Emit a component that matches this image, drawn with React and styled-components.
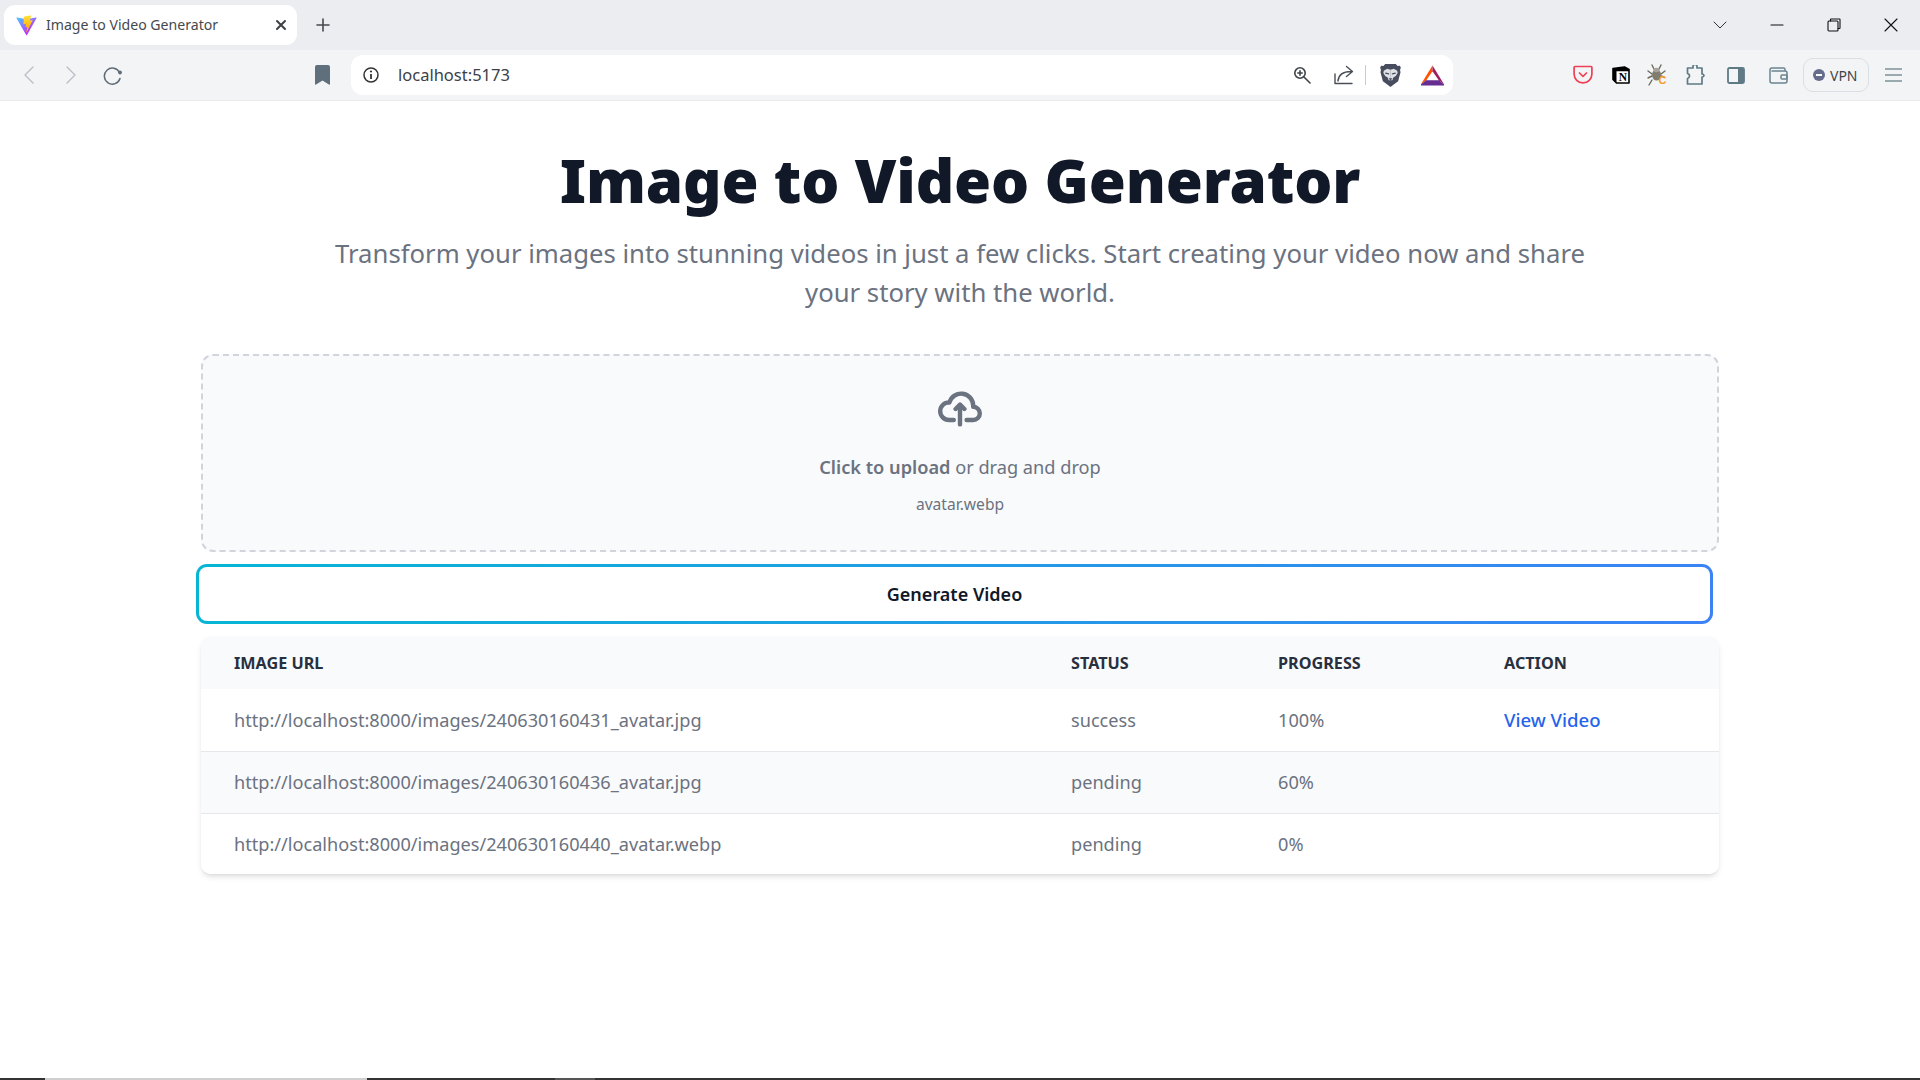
import React from "react";
import styled, { createGlobalStyle } from "styled-components";

const Global = createGlobalStyle`
  html, body { margin: 0; padding: 0; background: #fff; }
  body { font-family: "Noto Sans", "Open Sans", "Liberation Sans", sans-serif; }
  * { box-sizing: border-box; }
`;

const Page = styled.div`
  width: 1920px;
  height: 1080px;
  display: flex;
  flex-direction: column;
  overflow: hidden;
`;

const TabStrip = styled.div`
  height: 50px;
  background: #ebedf0;
  display: flex;
  align-items: flex-start;
  padding: 5px 0 0 4px;
`;

const Tab = styled.div`
  width: 293px;
  height: 40px;
  background: #fff;
  border-radius: 11px;
  display: flex;
  align-items: center;
  padding: 0 10px 0 12px;
  color: #45494e;
  font-size: 14.1px;
`;

const TabTitle = styled.span`
  margin-left: 9px;
  padding-bottom: 2px;
  flex: 1;
  white-space: nowrap;
`;

const NewTab = styled.div`
  margin-left: 13px;
  width: 26px;
  height: 40px;
  display: flex;
  align-items: center;
  justify-content: center;
`;

const WindowControls = styled.div`
  margin-left: auto;
  display: flex;
  height: 40px;
  align-items: center;
  padding-right: 1px;
`;

const WinButton = styled.div`
  width: 57px;
  display: flex;
  justify-content: center;
`;

const Toolbar = styled.div`
  height: 51px;
  background: #f3f4f6;
  border-bottom: 1px solid #e8eaed;
  display: flex;
  align-items: flex-start;
  padding: 5px 0 0 8px;
`;

const Slot = styled.div`
  flex: none;
  width: ${(p) => p.$w || 42}px;
  height: 40px;
  margin-left: ${(p) => p.$ml || 0}px;
  display: flex;
  align-items: center;
  justify-content: center;
`;

const AddressBar = styled.div`
  flex: none;
  width: 1102px;
  height: 40px;
  margin-left: 9px;
  margin-right: 111px;
  background: #fff;
  border-radius: 12px;
  display: flex;
  align-items: center;
`;

const Url = styled.span`
  margin-left: 7px;
  flex: 1;
  font-size: 16.5px;
  line-height: 40px;
  height: 40px;
  color: #3c4148;
`;

const Divider = styled.div`
  flex: none;
  width: 1px;
  height: 20px;
  background: #c9cbce;
  margin: 0 3px 0 0;
`;

const VpnButton = styled.div`
  flex: none;
  width: 66px;
  height: 34px;
  margin-top: 3px;
  border: 1px solid #d9dfe4;
  border-radius: 10px;
  display: flex;
  align-items: center;
  gap: 5px;
  padding-left: 9px;
  font-size: 14px;
  color: #3f444a;
`;

const VpnDot = styled.span`
  width: 12px;
  height: 12px;
  border-radius: 50%;
  background: #666d8c;
  display: flex;
  align-items: center;
  justify-content: center;
  &::after {
    content: "";
    width: 6px;
    height: 2px;
    background: #fff;
  }
`;

const Main = styled.main`
  flex: 1;
  display: flex;
  flex-direction: column;
  align-items: center;
  padding-top: 47px;
`;

const Title = styled.h1`
  margin: 0;
  font-size: 60px;
  line-height: 64px;
  font-weight: 900;
  color: #111827;
  letter-spacing: -0.15px;
`;

const Subtitle = styled.p`
  margin: 22px 0 0;
  width: 1270px;
  text-align: center;
  font-size: 25.7px;
  line-height: 39px;
  color: #6b7280;
`;

const Content = styled.div`
  width: 1518px;
  margin-top: 42px;
  display: flex;
  flex-direction: column;
`;

const DropZone = styled.div`
  height: 198px;
  background: #f9fafb;
  border: 2px dashed #d1d5db;
  border-radius: 12px;
  display: flex;
  flex-direction: column;
  align-items: center;
  padding-top: 35px;
  color: #6b7280;
`;

const DropText = styled.p`
  margin: 26px 0 0;
  font-size: 18.2px;
  line-height: 28px;
  strong { font-weight: 600; }
`;

const FileName = styled.p`
  margin: 11px 0 0;
  font-size: 15.6px;
  line-height: 24px;
`;

const GenerateButton = styled.button`
  width: 1517px;
  height: 60px;
  margin: 12px 0 0 -5px;
  border: 3px solid transparent;
  border-radius: 11px;
  background: linear-gradient(#fff, #fff) padding-box,
    linear-gradient(100deg, #06b6d4, #3b82f6) border-box;
  font-family: inherit;
  font-size: 18px;
  font-weight: 600;
  color: #111827;
`;

const TableCard = styled.div`
  margin-top: 12px;
  border-radius: 10px;
  overflow: hidden;
  box-shadow: 0 4px 6px -1px rgba(0, 0, 0, 0.1), 0 2px 4px -2px rgba(0, 0, 0, 0.1);
`;

const Table = styled.table`
  width: 100%;
  table-layout: fixed;
  border-collapse: collapse;
`;

const HeadCell = styled.th`
  width: ${(p) => p.$w}px;
  height: 53px;
  padding: 0 0 0 33px;
  text-align: left;
  background: #f9fafb;
  font-size: 16.2px;
  font-weight: 700;
  color: #283040;
  text-transform: uppercase;
`;

const Row = styled.tr`
  background: ${(p) => (p.$alt ? "#f9fafb" : "#fff")};
  border-bottom: ${(p) => (p.$last ? "none" : "1px solid #e5e7eb")};
`;

const Cell = styled.td`
  height: ${(p) => (p.$last ? 61 : 62)}px;
  padding: 0 0 0 33px;
  font-size: 18.15px;
  color: #6b7280;
`;

const VideoLink = styled.a`
  color: #2563eb;
  font-size: 18.6px;
  font-weight: 500;
  text-decoration: none;
`;

const TaskBar = styled.div`
  flex: none;
  height: 2px;
  background: #333;
  display: flex;
`;

const TaskSegment = styled.div`
  width: ${(p) => p.$w}px;
  margin-left: ${(p) => p.$ml}px;
  background: ${(p) => p.$c};
`;

const ViteLogo = () => (
  <svg width="21" height="21" viewBox="0 0 410 404" fill="none">
    <defs>
      <linearGradient id="va" x1="6" y1="33" x2="235" y2="344" gradientUnits="userSpaceOnUse">
        <stop stopColor="#41D1FF" />
        <stop offset="1" stopColor="#BD34FE" />
      </linearGradient>
      <linearGradient id="vb" x1="194.65" y1="8.8" x2="236.08" y2="292.99" gradientUnits="userSpaceOnUse">
        <stop stopColor="#FFEA83" />
        <stop offset="0.083" stopColor="#FFDD35" />
        <stop offset="1" stopColor="#FFA800" />
      </linearGradient>
    </defs>
    <path d="M399.641 59.5246L215.643 388.545C211.844 395.338 202.084 395.378 198.228 388.618L10.5817 59.5563C6.38087 52.1896 12.6802 43.2665 21.0281 44.7586L205.223 77.6824C206.398 77.8924 207.601 77.8904 208.776 77.6763L389.119 44.8058C397.439 43.2894 403.768 52.1434 399.641 59.5246Z" fill="url(#va)" />
    <path d="M292.965 1.5744L156.801 28.2552C154.563 28.6937 152.906 30.5903 152.771 32.8664L144.395 174.33C144.198 177.662 147.258 180.248 150.51 179.498L188.42 170.749C191.967 169.931 195.172 173.055 194.443 176.622L183.18 231.775C182.422 235.487 185.907 238.661 189.532 237.56L212.947 230.446C216.577 229.344 220.065 232.527 219.297 236.242L201.398 322.875C200.278 328.294 207.486 331.249 210.492 326.603L212.5 323.5L323.454 102.072C325.312 98.3645 322.108 94.137 318.036 94.9228L279.014 102.454C275.347 103.161 272.227 99.746 273.262 96.1583L298.731 7.86689C299.767 4.27314 296.636 0.855181 292.965 1.5744Z" fill="url(#vb)" />
  </svg>
);

const Stroke = ({ w = 20, h = 20, vb = "0 0 20 20", c = "#5f6b76", sw = 1.5, children }) => (
  <svg width={w} height={h} viewBox={vb} fill="none" stroke={c} strokeWidth={sw} strokeLinecap="round" strokeLinejoin="round">
    {children}
  </svg>
);

const BraveIcon = () => (
  <svg width="21" height="24" viewBox="0 0 22 24">
    <path d="M5.500.5h11l2 2 2.300-.3 1 2-.8 2.500.5 2.500-2.500 9.300-6 4.500-2 1.500-2-1.500-6-4.500L.500 9.200 1 6.700.2 4.200l1-2 2.300.3z" fill="#474d5e" />
    <path d="M4 7.500 7.500 5.500 11 6.500l3.500-1L18 7.500l.5 2.500-2 3-2.500 1.500-1 3H9l-1-3L5.500 13l-2-3z" fill="#dfe1e7" />
    <path d="M6 10l3 .8M16 10l-3 .8" stroke="#474d5e" strokeWidth="1.300" strokeLinecap="round" />
    <path d="M9 15.500h4L11 18z" fill="#474d5e" />
    <path d="M11 7v8" stroke="#bfc3cd" strokeWidth="1" />
  </svg>
);

const BatIcon = () => (
  <svg width="23" height="21" viewBox="0 0 24 21">
    <path d="M12 0 0 19.500l5.500-4L12 6z" fill="#ff5000" />
    <path d="M12 0 24 19.500l-5.500-4L12 6z" fill="#9e1f63" />
    <path d="M0 19.500 5.500 15.500h13l5.500 4V21H0z" fill="#662d91" />
  </svg>
);

const PocketIcon = () => (
  <svg width="20" height="20" viewBox="0 0 20 20" fill="none" stroke="#ef4056" strokeWidth="1.700" strokeLinecap="round" strokeLinejoin="round">
    <path d="M2 1.500h16a1 1 0 0 1 .9 1v6.500a8.900 8.900 0 0 1-17.800 0V2.500a1 1 0 0 1 .9-1z" />
    <path d="M6.500 8 10 11.300 13.500 8" />
  </svg>
);

const NotionIcon = () => (
  <svg width="18" height="18" viewBox="0 0 18 18">
    <path d="M1 2.500 12.500 1 17 3.500V17H4.500L1 13.500z" fill="#fff" stroke="#000" strokeWidth="1.600" strokeLinejoin="round" />
    <path d="M1 2.500 4.500 5.200H17V3.500L12.500 1zM1 2.500v11l3.500 3.500V5.200z" fill="#000" />
    <text x="10.800" y="15" fontFamily="Liberation Serif, serif" fontWeight="700" fontSize="11.500" textAnchor="middle" fill="#000">N</text>
  </svg>
);

const BugIcon = () => (
  <svg width="24" height="24" viewBox="0 0 24 24">
    <g stroke="#6d6a60" strokeWidth="1.400" fill="none" strokeLinecap="round">
      <path d="M7 2 9 6M16 2l-2 4M3 8l4 3M20 8l-4 3M3 15l4-2M4 22l3-5M16 13l3 1" />
    </g>
    <ellipse cx="11.500" cy="12" rx="4.500" ry="5.500" fill="#807c72" />
    <ellipse cx="11.500" cy="7" rx="3.200" ry="2.200" fill="#a7a398" />
    <text x="17.500" y="21" fontFamily="Liberation Sans, sans-serif" fontWeight="700" fontSize="11" textAnchor="middle" fill="#f59a23">C</text>
  </svg>
);

const App = () => (
  <Page>
    <Global />
    <TabStrip>
      <Tab>
        <ViteLogo />
        <TabTitle>Image to Video Generator</TabTitle>
        <Stroke w={12} h={12} vb="0 0 12 12" c="#3c4043" sw={2}>
          <path d="M2 2l8 8M10 2l-8 8" />
        </Stroke>
      </Tab>
      <NewTab>
        <Stroke w={14} h={14} vb="0 0 14 14" c="#45494e" sw={1.6}>
          <path d="M7 1v12M1 7h12" />
        </Stroke>
      </NewTab>
      <WindowControls>
        <WinButton>
          <Stroke w={14} h={8} vb="0 0 14 8" c="#333" sw={1}>
            <path d="M1 1l6 6 6-6" />
          </Stroke>
        </WinButton>
        <WinButton>
          <Stroke w={14} h={2} vb="0 0 14 2" c="#111" sw={1.2}>
            <path d="M1 1h12" />
          </Stroke>
        </WinButton>
        <WinButton>
          <Stroke w={14} h={14} vb="0 0 14 14" c="#111" sw={1.1}>
            <rect x="1" y="3" width="10" height="10" rx="1" />
            <path d="M3.500 3V1.500a.5.5 0 0 1 .5-.5h8.500a.5.5 0 0 1 .5.5V10a.5.5 0 0 1-.5.5H11" />
          </Stroke>
        </WinButton>
        <WinButton>
          <Stroke w={14} h={14} vb="0 0 14 14" c="#111" sw={1.1}>
            <path d="M1 1l12 12M13 1L1 13" />
          </Stroke>
        </WinButton>
      </WindowControls>
    </TabStrip>
    <Toolbar>
      <Slot>
        <Stroke w={14} h={20} vb="0 0 14 20" c="#b9c1c7" sw={1.4}>
          <path d="M11 2 3 10l8 8" />
        </Stroke>
      </Slot>
      <Slot>
        <Stroke w={14} h={20} vb="0 0 14 20" c="#b9c1c7" sw={1.4}>
          <path d="M3 2l8 8-8 8" />
        </Stroke>
      </Slot>
      <Slot>
        <svg width="20" height="20" viewBox="0 0 20 20" fill="none">
          <path d="M16.500 7.500A8 8 0 1 0 17 13.500" stroke="#5f6b76" strokeWidth="1.500" strokeLinecap="round" />
          <circle cx="17" cy="7.500" r="1.900" fill="#5f6b76" />
        </svg>
      </Slot>
      <Slot $w={40} $ml={168}>
        <svg width="15" height="20" viewBox="0 0 15 20">
          <path d="M2 0h11a2 2 0 0 1 2 2v17a.7.7 0 0 1-1.100.6L7.500 15.500 1.100 19.600A.7.7 0 0 1 0 19V2a2 2 0 0 1 2-2z" fill="#5f6f7b" />
        </svg>
      </Slot>
      <AddressBar>
        <Slot $w={40}>
          <svg width="16" height="16" viewBox="0 0 16 16" fill="none">
            <circle cx="8" cy="8" r="7" stroke="#333" strokeWidth="1.500" />
            <path d="M8 7v5" stroke="#333" strokeWidth="1.800" />
            <circle cx="8" cy="4.500" r="1.100" fill="#333" />
          </svg>
        </Slot>
        <Url>localhost:5173</Url>
        <Slot>
          <Stroke w={18} h={18} vb="0 0 18 18" c="#3f444a" sw={1.6}>
            <circle cx="7" cy="7" r="5.200" />
            <path d="M4.800 7h4.400M7 4.800v4.400M11 11l6 6" />
          </Stroke>
        </Slot>
        <Slot>
          <Stroke w={20} h={20} vb="0 0 20 20" c="#4a4f55" sw={1.4}>
            <path d="M1 9v9.500h17" />
            <path d="M4 16C4.500 10 8 6.500 17 6.500M12.500 1.500l6 5-6 5" />
          </Stroke>
        </Slot>
        <Divider />
        <Slot>
          <BraveIcon />
        </Slot>
        <Slot>
          <BatIcon />
        </Slot>
      </AddressBar>
      <Slot $w={38}>
        <PocketIcon />
      </Slot>
      <Slot $w={38}>
        <NotionIcon />
      </Slot>
      <Slot $w={34}>
        <BugIcon />
      </Slot>
      <Slot $w={44}>
        <Stroke w={20} h={20} vb="0 0 20 20" c="#5f7a85" sw={1.7}>
          <path d="M1.500 3h5.500V1.500a2 2 0 0 1 4 0V3h5v6a2 2 0 0 1 2 1.500 2 2 0 0 1-2 1.500v7H1.500v-5.500a2.500 2.500 0 0 0 2-2.500 2.500 2.500 0 0 0-2-2.500z" />
        </Stroke>
      </Slot>
      <Slot $w={36}>
        <svg width="18" height="17" viewBox="0 0 18 17" fill="none">
          <rect x="1" y="1" width="16" height="15" rx="1.500" stroke="#5f7a85" strokeWidth="1.800" />
          <rect x="11" y="1" width="6" height="15" fill="#5f7a85" />
        </svg>
      </Slot>
      <Slot $w={49}>
        <Stroke w={19} h={17} vb="0 0 19 17" c="#6b8490" sw={1.5}>
          <path d="M16 4V2.500A1.500 1.500 0 0 0 14.500 1H3A2 2 0 0 0 1 3v11a2 2 0 0 0 2 2h13a2 2 0 0 0 2-2V6a2 2 0 0 0-2-2H3" />
          <rect x="12" y="8" width="6" height="4" rx="1" />
        </Stroke>
      </Slot>
      <VpnButton>
        <VpnDot />
        VPN
      </VpnButton>
      <Slot $w={48}>
        <Stroke w={17} h={14} vb="0 0 17 14" c="#7d919b" sw={1.5}>
          <path d="M0 1h17M0 7h17M0 13h17" />
        </Stroke>
      </Slot>
    </Toolbar>
    <Main>
      <Title>Image to Video Generator</Title>
      <Subtitle>
        Transform your images into stunning videos in just a few clicks. Start creating your video now and share your
        story with the world.
      </Subtitle>
      <Content>
        <DropZone>
          <Stroke w={44} h={36} vb="0 0 20 16" c="#6b7280" sw={2}>
            <path d="M13 13h3a3 3 0 0 0 0-6h-.025A5.560 5.560 0 0 0 16 6.500 5.500 5.500 0 0 0 5.207 5.021C5.137 5.017 5.071 5 5 5a4 4 0 0 0 0 8h2.167M10 15V6m0 0L8 8m2-2 2 2" />
          </Stroke>
          <DropText>
            <strong>Click to upload</strong> or drag and drop
          </DropText>
          <FileName>avatar.webp</FileName>
        </DropZone>
        <GenerateButton>Generate Video</GenerateButton>
        <TableCard>
          <Table>
            <thead>
              <tr>
                <HeadCell $w={837}>Image URL</HeadCell>
                <HeadCell $w={207}>Status</HeadCell>
                <HeadCell $w={226}>Progress</HeadCell>
                <HeadCell $w={248}>Action</HeadCell>
              </tr>
            </thead>
            <tbody>
              <Row>
                <Cell>http://localhost:8000/images/240630160431_avatar.jpg</Cell>
                <Cell>success</Cell>
                <Cell>100%</Cell>
                <Cell>
                  <VideoLink href="#">View Video</VideoLink>
                </Cell>
              </Row>
              <Row $alt>
                <Cell>http://localhost:8000/images/240630160436_avatar.jpg</Cell>
                <Cell>pending</Cell>
                <Cell>60%</Cell>
                <Cell />
              </Row>
              <Row $last>
                <Cell $last>http://localhost:8000/images/240630160440_avatar.webp</Cell>
                <Cell $last>pending</Cell>
                <Cell $last>0%</Cell>
                <Cell $last />
              </Row>
            </tbody>
          </Table>
        </TableCard>
      </Content>
    </Main>
    <TaskBar>
      <TaskSegment $ml={45} $w={322} $c="#cfcfcf" />
      <TaskSegment $ml={188} $w={40} $c="#555" />
    </TaskBar>
  </Page>
);

export default App;
